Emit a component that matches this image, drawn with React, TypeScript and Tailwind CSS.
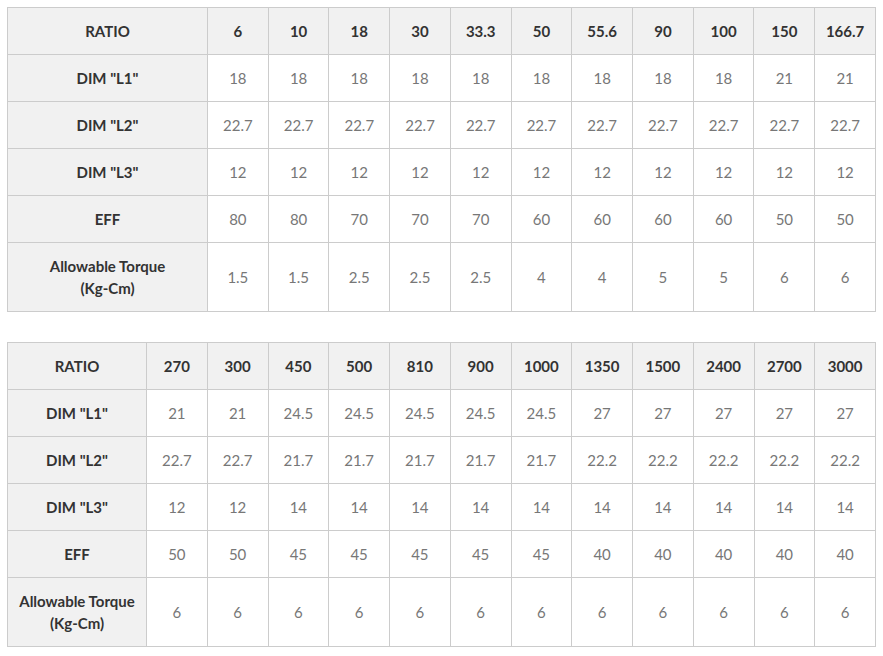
const tables = [
  {
    labelWidth: 200,
    cols: ["6", "10", "18", "30", "33.3", "50", "55.6", "90", "100", "150", "166.7"],
    rows: [
      { label: 'DIM "L1"', values: ["18", "18", "18", "18", "18", "18", "18", "18", "18", "21", "21"] },
      { label: 'DIM "L2"', values: ["22.7", "22.7", "22.7", "22.7", "22.7", "22.7", "22.7", "22.7", "22.7", "22.7", "22.7"] },
      { label: 'DIM "L3"', values: ["12", "12", "12", "12", "12", "12", "12", "12", "12", "12", "12"] },
      { label: "EFF", values: ["80", "80", "70", "70", "70", "60", "60", "60", "60", "50", "50"] },
    ],
    torque: ["1.5", "1.5", "2.5", "2.5", "2.5", "4", "4", "5", "5", "6", "6"],
  },
  {
    labelWidth: 139,
    cols: ["270", "300", "450", "500", "810", "900", "1000", "1350", "1500", "2400", "2700", "3000"],
    rows: [
      { label: 'DIM "L1"', values: ["21", "21", "24.5", "24.5", "24.5", "24.5", "24.5", "27", "27", "27", "27", "27"] },
      { label: 'DIM "L2"', values: ["22.7", "22.7", "21.7", "21.7", "21.7", "21.7", "21.7", "22.2", "22.2", "22.2", "22.2", "22.2"] },
      { label: 'DIM "L3"', values: ["12", "12", "14", "14", "14", "14", "14", "14", "14", "14", "14", "14"] },
      { label: "EFF", values: ["50", "50", "45", "45", "45", "45", "45", "40", "40", "40", "40", "40"] },
    ],
    torque: ["6", "6", "6", "6", "6", "6", "6", "6", "6", "6", "6", "6"],
  },
];

function SpecTable({ t }: { t: (typeof tables)[number] }) {
  return (
    <table className="w-[869px] table-fixed border-collapse border border-[#cccccc] text-[15px]">
      <colgroup>
        <col style={{ width: t.labelWidth }} />
        {t.cols.map((c) => (
          <col key={c} />
        ))}
      </colgroup>
      <tbody>
        <tr>
          <th className="h-[47px] border border-[#cccccc] bg-[#f1f1f1] text-center font-bold text-[#333333]">RATIO</th>
          {t.cols.map((c) => (
            <th key={c} className="h-[47px] border border-[#cccccc] bg-[#f1f1f1] text-center font-bold text-[#333333]">
              {c}
            </th>
          ))}
        </tr>
        {t.rows.map((r) => (
          <tr key={r.label}>
            <th className="h-[47px] border border-[#cccccc] bg-[#f1f1f1] text-center font-bold text-[#333333]">{r.label}</th>
            {r.values.map((v, i) => (
              <td key={i} className="h-[47px] border border-[#cccccc] bg-white text-center text-[#777777]">
                {v}
              </td>
            ))}
          </tr>
        ))}
        <tr>
          <th className="h-[69px] border border-[#cccccc] bg-[#f1f1f1] text-center font-bold leading-[22px] text-[#333333]">
            Allowable Torque
            <br />
            (Kg-Cm)
          </th>
          {t.torque.map((v, i) => (
            <td key={i} className="h-[69px] border border-[#cccccc] bg-white text-center text-[#777777]">
              {v}
            </td>
          ))}
        </tr>
      </tbody>
    </table>
  );
}

export default function App() {
  return (
    <div className="min-h-screen bg-white pl-[7px] pt-[7px] font-['Lato','Liberation_Sans',sans-serif]">
      <div className="flex flex-col gap-[30px]">
        {tables.map((t, i) => (
          <SpecTable key={i} t={t} />
        ))}
      </div>
    </div>
  );
}
